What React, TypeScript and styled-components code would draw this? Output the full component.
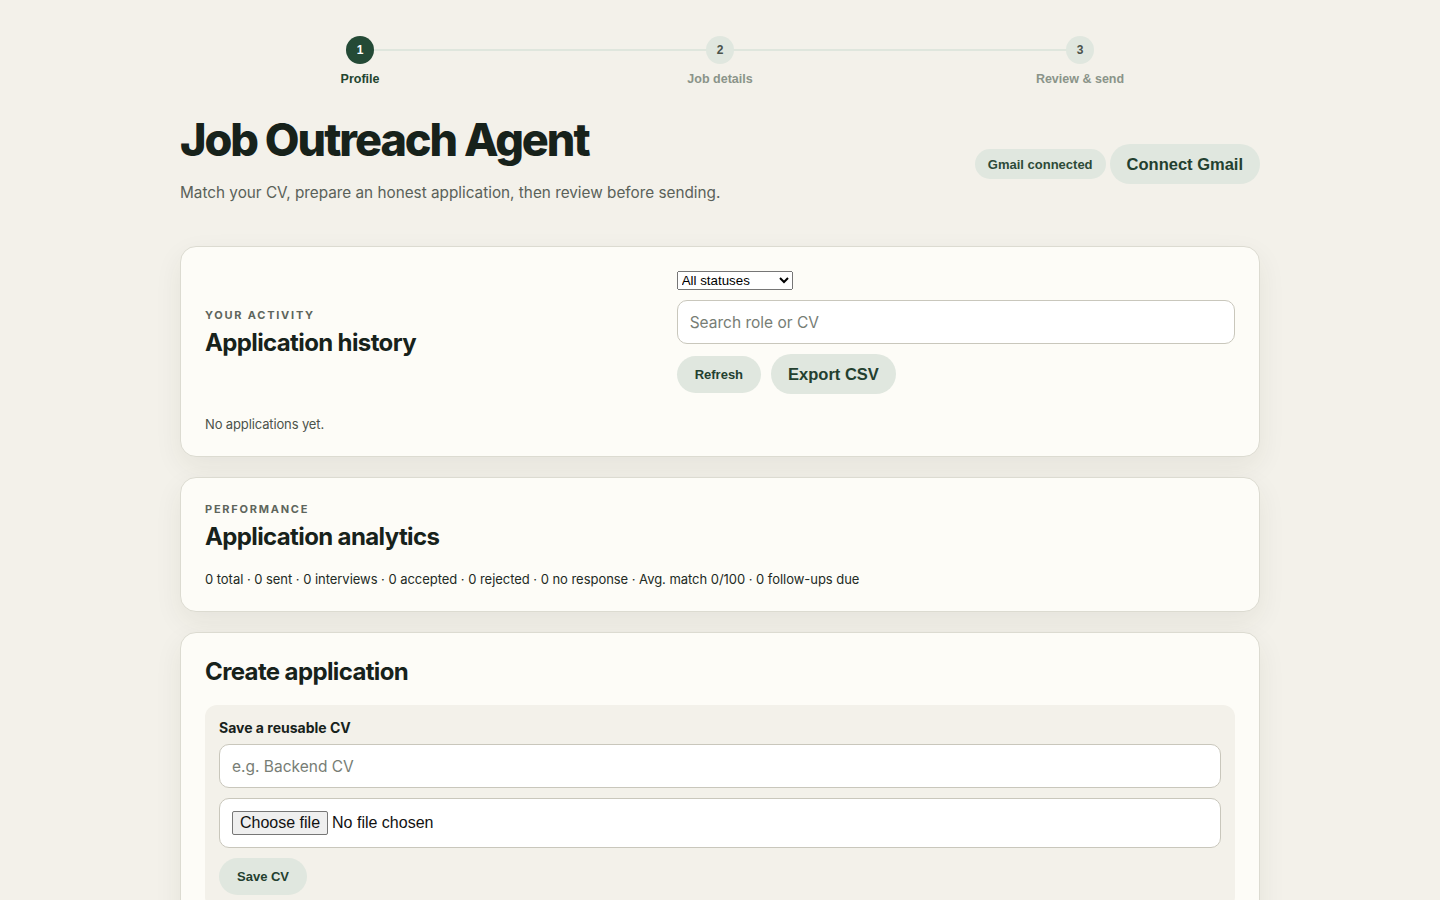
import styled, { createGlobalStyle } from 'styled-components';

const GlobalStyle = createGlobalStyle`
	* {
		box-sizing: border-box;
	}

	body {
		margin: 0;
		background-color: #f3f1ea;
		color: #17221b;
		font-family: Inter, 'Noto Sans', sans-serif;
	}
`;

const Page = styled.main`
	max-width: 1080px;
	margin: 0 auto;
	padding: 36px 0 40px;
`;

const Stepper = styled.ol`
	display: grid;
	grid-template-columns: repeat(3, 1fr);
	list-style: none;
	margin: 0;
	padding: 0;
`;

const Step = styled.li<{ $last?: boolean }>`
	position: relative;
	display: flex;
	flex-direction: column;
	align-items: center;
	gap: 8px;

	&::after {
		content: '';
		display: ${({ $last }) => ($last ? 'none' : 'block')};
		position: absolute;
		top: 13px;
		left: 50%;
		width: 100%;
		height: 2px;
		background-color: #dfe6dd;
		z-index: 0;
	}
`;

const StepDot = styled.span<{ $active?: boolean }>`
	position: relative;
	z-index: 1;
	display: grid;
	place-items: center;
	width: 28px;
	height: 28px;
	border-radius: 50%;
	background-color: ${({ $active }) => ($active ? '#244a36' : '#e0e7df')};
	color: ${({ $active }) => ($active ? '#ffffff' : '#4a524b')};
	font-family: 'Liberation Sans', Arial, sans-serif;
	font-size: 12px;
	font-weight: 700;
`;

const StepLabel = styled.span<{ $active?: boolean }>`
	color: ${({ $active }) => ($active ? '#23452f' : '#8a9489')};
	font-family: 'Liberation Sans', Arial, sans-serif;
	font-size: 12.5px;
	font-weight: 700;
`;

const Header = styled.header`
	display: flex;
	align-items: center;
	justify-content: space-between;
	margin: 24px 0 44px;
`;

const Title = styled.h1`
	margin: 0;
	font-size: 45px;
	font-weight: 800;
	letter-spacing: -0.045em;
	line-height: 60px;
	color: #17221b;
`;

const Subtitle = styled.p`
	margin: 13px 0 0;
	font-size: 15.3px;
	color: #5a6159;
`;

const HeaderActions = styled.div`
	display: flex;
	align-items: center;
	gap: 4px;
	margin-top: 16px;
`;

const Badge = styled.span`
	display: inline-flex;
	align-items: center;
	height: 30px;
	padding: 0 13px;
	border-radius: 999px;
	background-color: #e0e7df;
	color: #2d4a38;
	font-family: 'Liberation Sans', Arial, sans-serif;
	font-size: 13px;
	font-weight: 700;
`;

const PillButton = styled.button<{ $size?: 'sm' | 'lg' }>`
	border: none;
	border-radius: 999px;
	background-color: #e0e7df;
	color: #23402f;
	font-family: 'Liberation Sans', Arial, sans-serif;
	font-weight: 700;
	cursor: pointer;
	height: ${({ $size }) => ($size === 'lg' ? '40px' : '37px')};
	padding: ${({ $size }) => ($size === 'lg' ? '0 17px' : '0 18px')};
	font-size: ${({ $size }) => ($size === 'lg' ? '16.5px' : '13px')};
`;

const Stack = styled.div`
	display: flex;
	flex-direction: column;
	gap: 20px;
`;

const Card = styled.section`
	background-color: #fdfcf7;
	border: 1px solid #dcdbd1;
	border-radius: 16px;
	padding: 24px;
	box-shadow: 0 10px 28px rgba(60, 60, 30, 0.07);
`;

const HistoryGrid = styled.div`
	display: grid;
	grid-template-columns: 1fr 1.25fr;
	align-items: center;
	gap: 25px;
`;

const Eyebrow = styled.p`
	margin: 0 0 6px;
	color: #5e655c;
	font-size: 11px;
	font-weight: 700;
	letter-spacing: 0.16em;
	text-transform: uppercase;
`;

const CardTitle = styled.h2`
	margin: 0;
	font-size: 24px;
	font-weight: 700;
	letter-spacing: -0.026em;
	line-height: 30px;
	color: #17221b;
`;

const Controls = styled.div`
	display: flex;
	flex-direction: column;
	align-items: flex-start;
	gap: 10px;
`;

const StatusSelect = styled.select`
	width: 116px;
`;

const TextInput = styled.input`
	width: 100%;
	height: 44px;
	padding: 0 12px;
	border: 1px solid #c9c7bc;
	border-radius: 10px;
	background-color: #ffffff;
	font-family: Inter, sans-serif;
	font-size: 15.5px;
	color: #17221b;

	&::placeholder {
		color: #777d75;
	}
`;

const ButtonRow = styled.div`
	display: flex;
	align-items: center;
	gap: 10px;
`;

const Muted = styled.p<{ $top?: number }>`
	margin: ${({ $top }) => $top ?? 0}px 0 0;
	font-size: 13px;
	letter-spacing: -0.01em;
	color: #4c534b;
`;

const Stats = styled.p`
	margin: 19px 0 0;
	font-size: 13px;
	letter-spacing: -0.003em;
	color: #222a24;
`;

const Panel = styled.div`
	display: flex;
	flex-direction: column;
	align-items: flex-start;
	gap: 10px;
	margin-top: 18px;
	padding: 14px;
	border-radius: 12px;
	background-color: #f3f1ea;
`;

const FieldLabel = styled.label`
	font-size: 14px;
	font-weight: 700;
	color: #17221b;
	margin-bottom: -2px;
`;

const FileBox = styled.label`
	width: 100%;
	height: 50px;
	display: flex;
	align-items: center;
	gap: 4px;
	padding: 0 12px;
	border: 1px solid #c9c7bc;
	border-radius: 10px;
	background-color: #ffffff;
	font-family: 'Liberation Sans', Arial, sans-serif;
	font-size: 16px;
	color: #111;
	cursor: pointer;

	input {
		display: none;
	}
`;

const FileButton = styled.span`
	display: inline-flex;
	align-items: center;
	height: 24px;
	padding: 0 7px;
	border: 1px solid #767676;
	border-radius: 2px;
	background-color: #efefef;
	color: #111;
`;

const steps = ['Profile', 'Job details', 'Review & send'];

export default function App() {
	return (
		<>
			<GlobalStyle />
			<Page>
				<Stepper>
					{steps.map((label, index) => (
						<Step key={label} $last={index === steps.length - 1}>
							<StepDot $active={index === 0}>{index + 1}</StepDot>
							<StepLabel $active={index === 0}>{label}</StepLabel>
						</Step>
					))}
				</Stepper>

				<Header>
					<div>
						<Title>Job Outreach Agent</Title>
						<Subtitle>Match your CV, prepare an honest application, then review before sending.</Subtitle>
					</div>
					<HeaderActions>
						<Badge>Gmail connected</Badge>
						<PillButton type="button" $size="lg">
							Connect Gmail
						</PillButton>
					</HeaderActions>
				</Header>

				<Stack>
					<Card>
						<HistoryGrid>
							<div>
								<Eyebrow>Your activity</Eyebrow>
								<CardTitle>Application history</CardTitle>
							</div>
							<Controls>
								<StatusSelect defaultValue="all">
									<option value="all">All statuses</option>
									<option value="sent">Sent</option>
									<option value="draft">Draft</option>
								</StatusSelect>
								<TextInput placeholder="Search role or CV" />
								<ButtonRow>
									<PillButton type="button">Refresh</PillButton>
									<PillButton type="button" $size="lg">
										Export CSV
									</PillButton>
								</ButtonRow>
							</Controls>
						</HistoryGrid>
						<Muted $top={22}>No applications yet.</Muted>
					</Card>

					<Card>
						<Eyebrow>Performance</Eyebrow>
						<CardTitle>Application analytics</CardTitle>
						<Stats>
							0 total · 0 sent · 0 interviews · 0 accepted · 0 rejected · 0 no response · Avg. match 0/100 · 0 follow-ups
							due
						</Stats>
					</Card>

					<Card>
						<CardTitle>Create application</CardTitle>
						<Panel>
							<FieldLabel>Save a reusable CV</FieldLabel>
							<TextInput placeholder="e.g. Backend CV" />
							<FileBox>
								<input type="file" />
								<FileButton>Choose file</FileButton>
								<span>No file chosen</span>
							</FileBox>
							<PillButton type="button">Save CV</PillButton>
						</Panel>
					</Card>
				</Stack>
			</Page>
		</>
	);
}
